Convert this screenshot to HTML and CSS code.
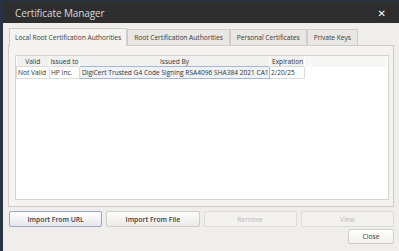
FILE: index.html
```html
<!DOCTYPE html>
<html>
<head>
<meta charset="utf-8">
<link rel="stylesheet" href="styles.css">
</head>
<body>
<div class="desk">
  <div class="window">
    <div class="titlebar">
      <span class="title">Certificate Manager</span>
      <span class="close-x">✕</span>
    </div>
    <div class="content">
      <div class="tabs">
        <div class="tab active">Local Root Certification Authorities</div>
        <div class="tab">Root Certification Authorities</div>
        <div class="tab">Personal Certificates</div>
        <div class="tab">Private Keys</div>
      </div>
      <div class="pane">
        <div class="tablebox">
          <table class="grid">
            <colgroup>
              <col class="c-valid">
              <col class="c-to">
              <col class="c-by">
              <col class="c-exp">
              <col>
            </colgroup>
            <thead>
              <tr>
                <th>Valid</th>
                <th>Issued to</th>
                <th>Issued By</th>
                <th class="left">Expiration</th>
                <th class="fill"></th>
              </tr>
            </thead>
            <tbody>
              <tr>
                <td>Not Valid</td>
                <td>HP Inc.</td>
                <td class="sel">DigiCert Trusted G4 Code Signing RSA4096 SHA384 2021 CA1</td>
                <td>2/20/25</td>
                <td class="fill"></td>
              </tr>
            </tbody>
          </table>
        </div>
      </div>
      <div class="actions">
        <div class="btn focus">Import From URL</div>
        <div class="btn">Import From File</div>
        <div class="btn disabled">Remove</div>
        <div class="btn disabled">View</div>
      </div>
      <div class="footer">
        <div class="btn close">Close</div>
      </div>
    </div>
  </div>
</div>
</body>
</html>
```
FILE: styles.css
```css
html, body {
  margin: 0;
  padding: 0;
  width: 399px;
  height: 251px;
  overflow: hidden;
  background: #2a3142;
  font-family: "Open Sans", "DejaVu Sans", sans-serif;
}
.desk {
  padding: 2px 0 0 3px;
  height: 251px;
  box-sizing: border-box;
}
.window {
  height: 249px;
  display: flex;
  flex-direction: column;
  background: #efeeea;
}
.titlebar {
  height: 21px;
  flex: none;
  background: #2e2e2e;
  display: flex;
  align-items: center;
  justify-content: space-between;
  padding: 0 13px 0 12px;
}
.title {
  color: #d8d8d8;
  font-size: 10px;
  letter-spacing: -0.1px;
}
.close-x {
  color: #ffffff;
  font-size: 10px;
  font-weight: bold;
}
.content {
  flex: 1;
  padding: 5px 5px 0 5px;
  display: flex;
  flex-direction: column;
}
.tabs {
  display: flex;
  padding-left: 1px;
  height: 17px;
  align-items: flex-end;
}
.tab {
  height: 16px;
  box-sizing: border-box;
  border: 1px solid #cfcdc9;
  border-bottom: none;
  background: #e9e7e3;
  color: #3a3a3a;
  font-size: 6.7px;
  letter-spacing: -0.05px;
  line-height: 15px;
  padding: 0 6px;
  margin-left: 0;
  white-space: nowrap;
}
.tab.active {
  background: #f4f3f0;
  line-height: 17px;
  padding: 0 5px;
  position: relative;
  z-index: 1;
  margin-bottom: -1px;
  height: 18px;
}
.pane {
  height: 162px;
  box-sizing: border-box;
  border: 1px solid #cfcdc9;
  background: #f4f3f0;
  padding: 9px 4px 6px 6px;
}
.tablebox {
  height: 100%;
  box-sizing: border-box;
  border: 1px solid #d3d3d1;
  background: #ffffff;
}
.grid {
  border-collapse: collapse;
  table-layout: fixed;
  width: 100%;
  font-size: 6.6px;
  color: #333;
}
.c-valid { width: 33px; }
.c-to { width: 30px; }
.c-by { width: 190px; }
.c-exp { width: 35px; }
.grid th {
  font-weight: normal;
  height: 10px;
  padding: 0;
  background: #f0f0ef;
  border-right: 1px solid #ffffff;
  text-align: center;
  white-space: nowrap;
  overflow: hidden;
}
.grid th.left {
  text-align: left;
  padding-left: 2px;
}
.grid th.fill {
  background: #f7f7f6;
  border-right: none;
}
.grid td {
  height: 11px;
  padding: 0 1px 0 1px;
  border: 1px solid #dcdcdc;
  white-space: nowrap;
  overflow: hidden;
}
.grid td.sel {
  background: #eef2f9;
  border: 1px solid #a9b8d2;
  padding-left: 2px;
}
.grid td.fill {
  border: none;
}
.actions {
  display: grid;
  grid-template-columns: repeat(4, 1fr);
  column-gap: 4px;
  margin-top: 4px;
  height: 16px;
  padding-left: 1px;
}
.btn {
  box-sizing: border-box;
  height: 16px;
  border: 1px solid #cfcdca;
  border-radius: 2px;
  background: linear-gradient(#fcfcfb, #ecebe8);
  color: #3c3c3c;
  font-size: 6.8px;
  font-weight: 600;
  display: flex;
  align-items: center;
  justify-content: center;
}
.btn.focus {
  border-color: #9aa8c0;
  background: linear-gradient(#ffffff, #e6e7ea);
}
.btn.disabled {
  color: #b9b8b5;
  font-weight: normal;
  background: #f3f2ef;
  border-color: #dddbd8;
}
.footer {
  display: flex;
  justify-content: flex-end;
  margin-top: 2px;
}
.btn.close {
  width: 46px;
  height: 15px;
  font-weight: normal;
  background: linear-gradient(#ffffff, #f1f0ee);
}
```
